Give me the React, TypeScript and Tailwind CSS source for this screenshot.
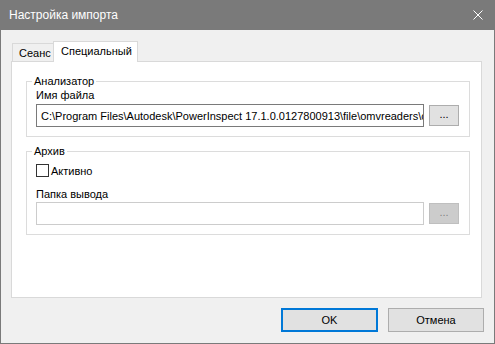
function Fieldset({ title, children }: { title: string; children: React.ReactNode }) {
  return (
    <fieldset className="ml-[14px] mr-[11px] border border-[#dcdcdc] pl-[9px] pr-[10px] pb-[9px] min-w-0">
      <legend className="-ml-[4px] px-[2px] leading-[14px]">{title}</legend>
      {children}
    </fieldset>
  );
}

function BrowseButton({ disabled }: { disabled?: boolean }) {
  return (
    <button
      disabled={disabled}
      className={`shrink-0 w-[30px] h-[21px] border leading-[14px] pb-[3px] ${
        disabled ? "bg-[#cccccc] border-[#bfbfbf] text-[#838383]" : "bg-[#e1e1e1] border-[#adadad] text-black"
      }`}
    >
      ...
    </button>
  );
}

export default function App() {
  return (
    <div className="w-[495px] h-[344px] bg-[#7a7a7a] px-px pb-px flex flex-col font-['Liberation_Sans',Arial,sans-serif] text-[11px] text-black select-none">
      <div className="h-[30px] shrink-0 flex items-center justify-between pl-[8px] pr-[10px] text-white text-[12px] leading-[15px]">
        <span>Настройка импорта</span>
        <svg width="10" height="10" viewBox="0 0 10 10" className="mr-[1px]">
          <path d="M0.5 0.5 L9.5 9.5 M9.5 0.5 L0.5 9.5" stroke="white" strokeWidth="1" />
        </svg>
      </div>

      <div className="flex-1 bg-[#f0f0f0] pt-[11px] pl-[10px] pr-[11px] pb-[11px] flex flex-col">
        <div className="flex items-end pl-px h-[20px] mr-px">
          <div className="w-[41px] h-[18px] border-l border-t border-[#d9d9d9] pl-[6px] pt-[2px] leading-[14px]">
            Сеанс
          </div>
          <div className="relative z-10 w-[85px] h-[21px] -mb-px bg-white border-l border-t border-r border-[#d9d9d9] pl-[7px] pt-[2px] leading-[14px] whitespace-nowrap">
            Специальный
          </div>
        </div>

        <div className="h-[237px] mr-px bg-white border border-[#d9d9d9] pt-[12px] flex flex-col">
          <Fieldset title="Анализатор">
            <div className="leading-[14px]">Имя файла</div>
            <div className="mt-[2px] flex items-center gap-[5px]">
              <div className="flex-1 min-w-0 h-[23px] border border-[#7a7a7a] px-[4px] flex items-center overflow-hidden whitespace-nowrap leading-[14px]">
                C:\Program Files\Autodesk\PowerInspect 17.1.0.0127800913\file\omvreaders\omvreaders.dll
              </div>
              <BrowseButton />
            </div>
          </Fieldset>

          <div className="mt-[7px]">
            <Fieldset title="Архив">
              <label className="mt-[6px] h-[13px] flex items-center gap-[2px] leading-[14px]">
                <span className="w-[13px] h-[13px] border border-[#333333] bg-white" />
                Активно
              </label>
              <div className="mt-[10px] leading-[14px]">Папка вывода</div>
              <div className="mt-[1px] flex items-center gap-[5px]">
                <div className="flex-1 min-w-0 h-[23px] border border-[#cccccc] bg-white" />
                <BrowseButton disabled />
              </div>
            </Fieldset>
          </div>
        </div>

        <div className="mt-[10px] flex justify-end gap-[10px] -mr-px">
          <button className="w-[97px] h-[24px] bg-[#e1e1e1] border-2 border-[#0078d7] leading-[14px]">OK</button>
          <button className="w-[96px] h-[24px] bg-[#e1e1e1] border border-[#adadad] leading-[14px]">Отмена</button>
        </div>
      </div>
    </div>
  );
}
